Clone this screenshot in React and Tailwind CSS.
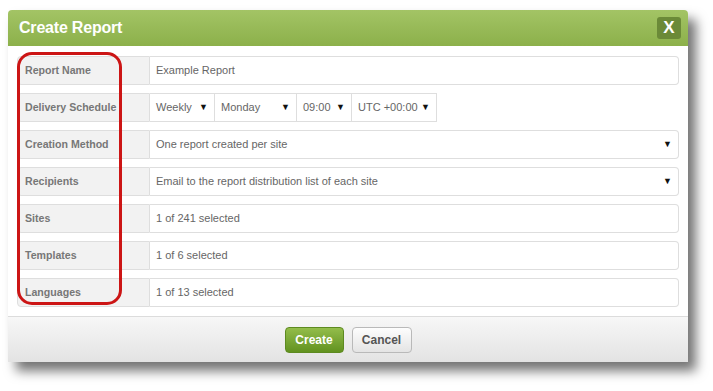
const rows = [
  { label: 'Report Name', value: 'Example Report' },
  { label: 'Delivery Schedule', schedule: true },
  { label: 'Creation Method', value: 'One report created per site', select: true },
  { label: 'Recipients', value: 'Email to the report distribution list of each site', select: true },
  { label: 'Sites', value: '1 of 241 selected' },
  { label: 'Templates', value: '1 of 6 selected' },
  { label: 'Languages', value: '1 of 13 selected' },
]

const schedule = [
  { text: 'Weekly', w: 'w-[65px]' },
  { text: 'Monday', w: 'w-[82px]' },
  { text: '09:00', w: 'w-[55px]' },
  { text: 'UTC +00:00', w: 'w-[85px]' },
]

const Arrow = () => <span className="text-[9px] text-[#111] leading-none">▼</span>

const App = () => {
  return (
    <div className="w-[713px] h-[391px] bg-white relative font-['Liberation_Sans',Arial,sans-serif] pt-[10px] pl-[8px]">
      <div className="w-[680px] h-[352px] bg-white rounded-t-[4px] flex flex-col shadow-[8px_9px_12px_rgba(0,0,0,0.55)]">
        <div className="h-[36px] bg-gradient-to-b from-[#a3c465] to-[#8cb04a] rounded-t-[4px] flex items-center justify-between pl-[11px] pr-[7px]">
          <h1 className="text-white font-bold text-[16px] tracking-[-0.2px]">Create Report</h1>
          <div className="w-[24px] h-[22px] bg-[#6b8a38] rounded-[3px] flex items-center justify-center text-white font-bold text-[17px]">X</div>
        </div>

        <div className="flex-1 px-[9px] pt-[10px] flex flex-col gap-[8px]">
          {rows.map(r => (
            <div key={r.label} className="flex h-[29px] text-[11px]">
              <div className="w-[133px] bg-[#f2f2f2] border border-[#dedede] rounded-l-[4px] flex items-center pl-[7px] font-bold text-[10.6px] text-[#777]">
                {r.label}
              </div>
              {r.schedule ? (
                <div className="flex-1 flex">
                  {schedule.map(s => (
                    <div key={s.text} className={`${s.w} border border-l-0 border-[#dedede] bg-white flex items-center justify-between pl-[6px] pr-[6px] text-[#666]`}>
                      <span>{s.text}</span>
                      <Arrow />
                    </div>
                  ))}
                </div>
              ) : (
                <div className="flex-1 border border-l-0 border-[#dedede] rounded-r-[4px] bg-white flex items-center justify-between pl-[6px] pr-[6px] text-[#666]">
                  <span>{r.value}</span>
                  {r.select && <Arrow />}
                </div>
              )}
            </div>
          ))}
        </div>

        <div className="h-[46px] border-t border-[#dcdcdc] bg-gradient-to-b from-[#f7f7f7] to-[#e3e3e3] flex items-center justify-center gap-[8px]">
          <button className="w-[59px] h-[26px] rounded-[4px] bg-gradient-to-b from-[#93bd4a] to-[#62921f] border border-[#5d8a20] text-white font-bold text-[12px]">Create</button>
          <button className="w-[60px] h-[26px] rounded-[4px] bg-gradient-to-b from-[#fdfdfd] to-[#e4e4e4] border border-[#b9b9b9] text-[#555] font-bold text-[12px]">Cancel</button>
        </div>
      </div>

      <div className="absolute left-[17px] top-[52px] w-[105px] h-[253px] border-[3px] border-[#cc1515] rounded-[15px]"></div>
    </div>
  )
}

export default App
